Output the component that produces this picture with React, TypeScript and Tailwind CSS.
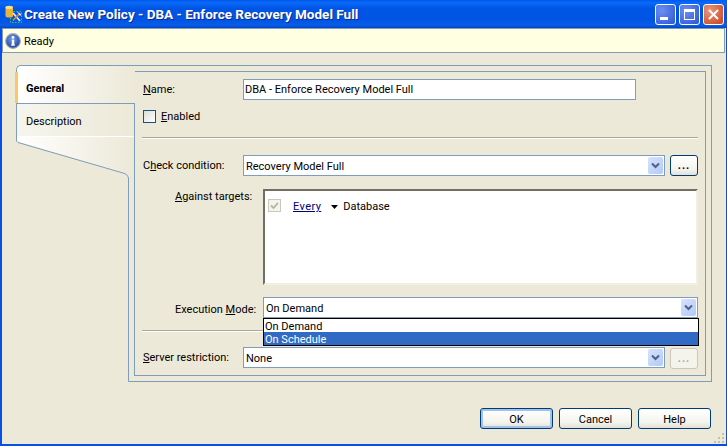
import React from "react";

function Chevron() {
  return (
    <svg width="9" height="7" viewBox="0 0 9 7" className="block">
      <path d="M1 1.5 L4.5 5 L8 1.5" fill="none" stroke="#4d6185" strokeWidth="2" />
    </svg>
  );
}

function Combo({ value, className }: { value: string; className: string }) {
  return (
    <div className={`h-[21px] border border-[#7f9db9] bg-white flex items-center pl-[2px] pr-px ${className}`}>
      <span className="flex-1 leading-none pt-[2px]">{value}</span>
      <span className="w-[15px] h-[17px] rounded-[2px] bg-[linear-gradient(135deg,#d6e3fe,#b4c9f8)] flex items-center justify-center">
        <Chevron />
      </span>
    </div>
  );
}

function Btn({ label, def }: { label: string; def?: boolean }) {
  return (
    <button
      className={`w-[73px] h-[21px] pt-[2px] rounded-[3px] border border-[#003c74] bg-[linear-gradient(#ffffff,#f4f4ee_70%,#e2e0d6)] leading-none text-black ${
        def ? "shadow-[inset_0_0_0_2px_#a6c0ec]" : ""
      }`}
    >
      {label}
    </button>
  );
}

function Label({ text, u, className = "" }: { text: string; u: number; className?: string }) {
  return (
    <span className={`leading-[14px] whitespace-nowrap ${className}`}>
      {text.slice(0, u)}
      <span className="underline">{text[u]}</span>
      {text.slice(u + 1)}
    </span>
  );
}

function Sep({ className }: { className: string }) {
  return <div className={`h-[2px] border-t border-[#aca899] bg-white ${className}`} />;
}

function AppIcon() {
  return (
    <svg width="18" height="18" viewBox="0 0 18 18" className="shrink-0">
      <rect x="5.5" y="6.5" width="11" height="11" fill="none" stroke="#4fc34f" strokeDasharray="1.5 1.5" />
      <path d="M0.5 2.5 C0.5 0.5 8 0.5 8 2.5 V11 C8 13 0.5 13 0.5 11Z" fill="#e5b53a" />
      <ellipse cx="4.2" cy="2.5" rx="3.7" ry="1.7" fill="#f8e08a" />
      <path d="M8 8 L15 16" stroke="#eeeeee" strokeWidth="1.6" />
      <path d="M15 8 L8 15.5" stroke="#c98a34" strokeWidth="1.8" />
      <path d="M12 6.5 L16.5 9.5 L15 11 Z" fill="#e6e6e6" />
    </svg>
  );
}

function InfoIcon() {
  return (
    <svg width="16" height="16" viewBox="0 0 16 16" className="shrink-0">
      <defs>
        <radialGradient id="ig" cx="45%" cy="35%" r="70%">
          <stop offset="0%" stopColor="#6f9bea" />
          <stop offset="100%" stopColor="#1a3f9c" />
        </radialGradient>
      </defs>
      <circle cx="8" cy="8" r="7.4" fill="url(#ig)" stroke="#a9adb8" strokeWidth="1.1" />
      <circle cx="8" cy="4.4" r="1.4" fill="#ffffff" />
      <rect x="6.8" y="6.6" width="2.5" height="5.6" fill="#ffffff" />
      <rect x="6" y="11.6" width="4" height="1" fill="#ffffff" />
    </svg>
  );
}

export default function App() {
  return (
    <div className="[font-family:Roboto,sans-serif] relative w-[727px] h-[446px] overflow-hidden flex flex-col bg-[#ece9d8] text-[11px] text-black">
      {/* Title bar */}
      <div className="h-[28px] shrink-0 flex items-center pl-[5px] pr-[3px] bg-[linear-gradient(#0058ee,#0a6af8_10%,#0055e5_30%,#0054e3_70%,#0a5de8_90%,#0044c4)]">
        <AppIcon />
        <span className="ml-[1px] flex-1 text-[13.5px] font-bold text-white whitespace-nowrap [text-shadow:1px_1px_#0a2a8a] [font-family:'Open_Sans',sans-serif]">
          Create New Policy - DBA - Enforce Recovery Model Full
        </span>
        <div className="flex gap-[3px]">
          <div className="w-[21px] h-[21px] rounded-[3px] border border-white bg-[radial-gradient(circle_at_30%_30%,#6d90ee,#2c53d6)] flex items-end pl-[4px] pb-[4px]">
            <div className="w-[8px] h-[3px] bg-white" />
          </div>
          <div className="w-[21px] h-[21px] rounded-[3px] border border-white bg-[radial-gradient(circle_at_30%_30%,#6d90ee,#2c53d6)] flex items-center justify-center">
            <div className="w-[11px] h-[11px] border border-white border-t-[3px]" />
          </div>
          <div className="w-[21px] h-[21px] rounded-[3px] border border-white bg-[radial-gradient(circle_at_30%_30%,#e9977c,#c8411a)] flex items-center justify-center">
            <svg width="11" height="11" viewBox="0 0 11 11">
              <path d="M1 1 L10 10 M10 1 L1 10" stroke="#ffffff" strokeWidth="2" />
            </svg>
          </div>
        </div>
      </div>

      {/* Body with window frame */}
      <div className="flex-1 flex flex-col border-l-2 border-r border-b-2 border-[#0a4fe4] min-h-0">
        {/* Status bar */}
        <div className="h-[25px] shrink-0 border border-[#7f9db9] bg-[#ffffe1] flex items-center gap-[3px] pl-[2px] mr-px">
          <InfoIcon />
          <span className="pt-[2px] leading-[14px]">Ready</span>
        </div>

        {/* Tab control */}
        <div className="ml-[14px] mt-[12px] flex h-[317px] w-[696px]">
          {/* Left tab column */}
          <div className="w-[118px] shrink-0 flex flex-col">
            <div className="relative z-10 w-[119px] h-[38px] shrink-0 border-t border-l border-[#7f9db9] rounded-tl-[5px] bg-[linear-gradient(90deg,#ffffff,#ece9d8)] flex items-center pl-[9px] pt-[10px] font-bold">
              <div className="absolute left-[-2px] top-[6px] w-[3px] h-[31px] bg-[#fdc766]" />
              General
            </div>
            <div className="h-[38px] shrink-0 border-t border-l border-[#7f9db9] flex flex-col bg-[linear-gradient(90deg,#ffffff,#ece9d8)]">
              <div className="h-[32px] flex items-center pl-[9px] pt-[4px] bg-[linear-gradient(90deg,#f6f5ee,#ece9d8)]">Description</div>
              <div className="h-px bg-white" />
            </div>
            <svg width="118" height="241" viewBox="0 0 118 241" className="block shrink-0">
              <defs>
                <linearGradient id="wg" x1="0" x2="1" y1="0" y2="0">
                  <stop offset="0%" stopColor="#ffffff" />
                  <stop offset="100%" stopColor="#ece9d8" />
                </linearGradient>
              </defs>
              <path d="M0 0 L118 0 L118 36 L112 36 L107 32 L3 1 L0 0Z" fill="url(#wg)" />
              <path
                d="M0.5 0 L2 1.5 L107 32 Q112.5 33.5 112.5 38 L112.5 240.5 L118 240.5"
                fill="none"
                stroke="#7f9db9"
              />
            </svg>
          </div>

          {/* Right page */}
          <div className="w-[578px] shrink-0 border-t border-r border-b border-[#7f9db9] flex flex-col pt-[5px] pr-[5px] pb-[5px]">
            <div className="flex-1 border border-[#7f9db9] pl-[8px] pr-[7px] flex flex-col">
              <div className="mt-[7px] h-[21px] flex items-center">
                <Label text="Name:" u={0} className="w-[100px]" />
                <div className="w-[393px] h-[21px] border border-[#7f9db9] bg-white flex items-center pl-[1px] leading-none">
                  DBA - Enforce Recovery Model Full
                </div>
              </div>
              <div className="mt-[10px] h-[13px] flex items-center">
                <div className="w-[13px] h-[13px] border border-[#1c5180] bg-[linear-gradient(135deg,#dcdcd7,#ffffff)]" />
                <Label text="Enabled" u={0} className="ml-[5px]" />
              </div>
              <Sep className="mt-[14px] -ml-px" />
              <div className="mt-[16px] h-[21px] flex items-center">
                <Label text="Check condition:" u={1} className="w-[100px]" />
                <Combo value="Recovery Model Full" className="w-[422px]" />
                <button className="ml-[5px] w-[28px] h-[21px] rounded-[3px] border border-[#003c74] bg-[linear-gradient(#ffffff,#f4f4ee_70%,#e2e0d6)] leading-none font-bold tracking-[1px]">
                  ...
                </button>
              </div>
              <div className="mt-[13px] h-[96px] flex">
                <Label text="Against targets:" u={0} className="ml-[32px] w-[88px] pt-px" />
                <div className="flex-1 border-2 border-t-[#716f64] border-l-[#716f64] border-r-[#f1efe2] border-b-[#f1efe2] bg-white flex items-start pt-[8px] pl-[3px]">
                  <div className="w-[13px] h-[13px] border border-[#cac8bb] bg-[#f4f3ec] flex items-center justify-center">
                    <svg width="9" height="9" viewBox="0 0 9 9">
                      <path d="M1 4.5 L3.5 7 L8 1.8" fill="none" stroke="#b5b3a6" strokeWidth="1.8" />
                    </svg>
                  </div>
                  <span className="ml-[12px] mt-px leading-[13px] text-[#000080] underline tracking-[0.4px]">Every</span>
                  <svg width="7" height="4" viewBox="0 0 7 4" className="ml-[10px] mt-[6px]">
                    <path d="M0 0 H7 L3.5 4Z" fill="#000000" />
                  </svg>
                  <span className="ml-[5px] mt-px leading-[13px]">Database</span>
                </div>
              </div>
              <div className="relative z-10 mt-[12px] h-[21px] flex items-center">
                <Label text="Execution Mode:" u={10} className="ml-[32px] w-[88px] pt-[4px]" />
                <Combo value="On Demand" className="flex-1" />
                <div className="absolute left-[120px] right-[-1px] top-[21px] border border-black bg-white">
                  <div className="h-[13px] flex items-center pl-[1px] pt-[2px] leading-none">On Demand</div>
                  <div className="h-[13px] flex items-center pl-[1px] pt-[2px] leading-none bg-[#316ac5] text-white">On Schedule</div>
                </div>
              </div>
              <Sep className="mt-[12px] -ml-px" />
              <div className="mt-[15px] h-[21px] flex items-center">
                <Label text="Server restriction:" u={0} className="w-[100px]" />
                <Combo value="None" className="w-[422px]" />
                <button className="ml-[5px] w-[28px] h-[21px] mt-[1px] rounded-[3px] border border-[#cac8bb] bg-[#f4f3ec] leading-none text-[#aca899] font-bold tracking-[1px]">
                  ...
                </button>
              </div>
            </div>
          </div>
        </div>

        {/* Footer buttons */}
        <div className="mt-[26px] ml-[478px] flex gap-[6px]">
          <Btn label="OK" def />
          <Btn label="Cancel" />
          <Btn label="Help" />
        </div>
      </div>

      {/* Resize grip */}
      <svg width="11" height="11" viewBox="0 0 11 11" className="absolute right-[2px] bottom-[2px]">
        <g fill="#c3c0ae">
          <rect x="8" y="0" width="2" height="2" />
          <rect x="4" y="4" width="2" height="2" />
          <rect x="8" y="4" width="2" height="2" />
          <rect x="0" y="8" width="2" height="2" />
          <rect x="4" y="8" width="2" height="2" />
          <rect x="8" y="8" width="2" height="2" />
        </g>
      </svg>
    </div>
  );
}
